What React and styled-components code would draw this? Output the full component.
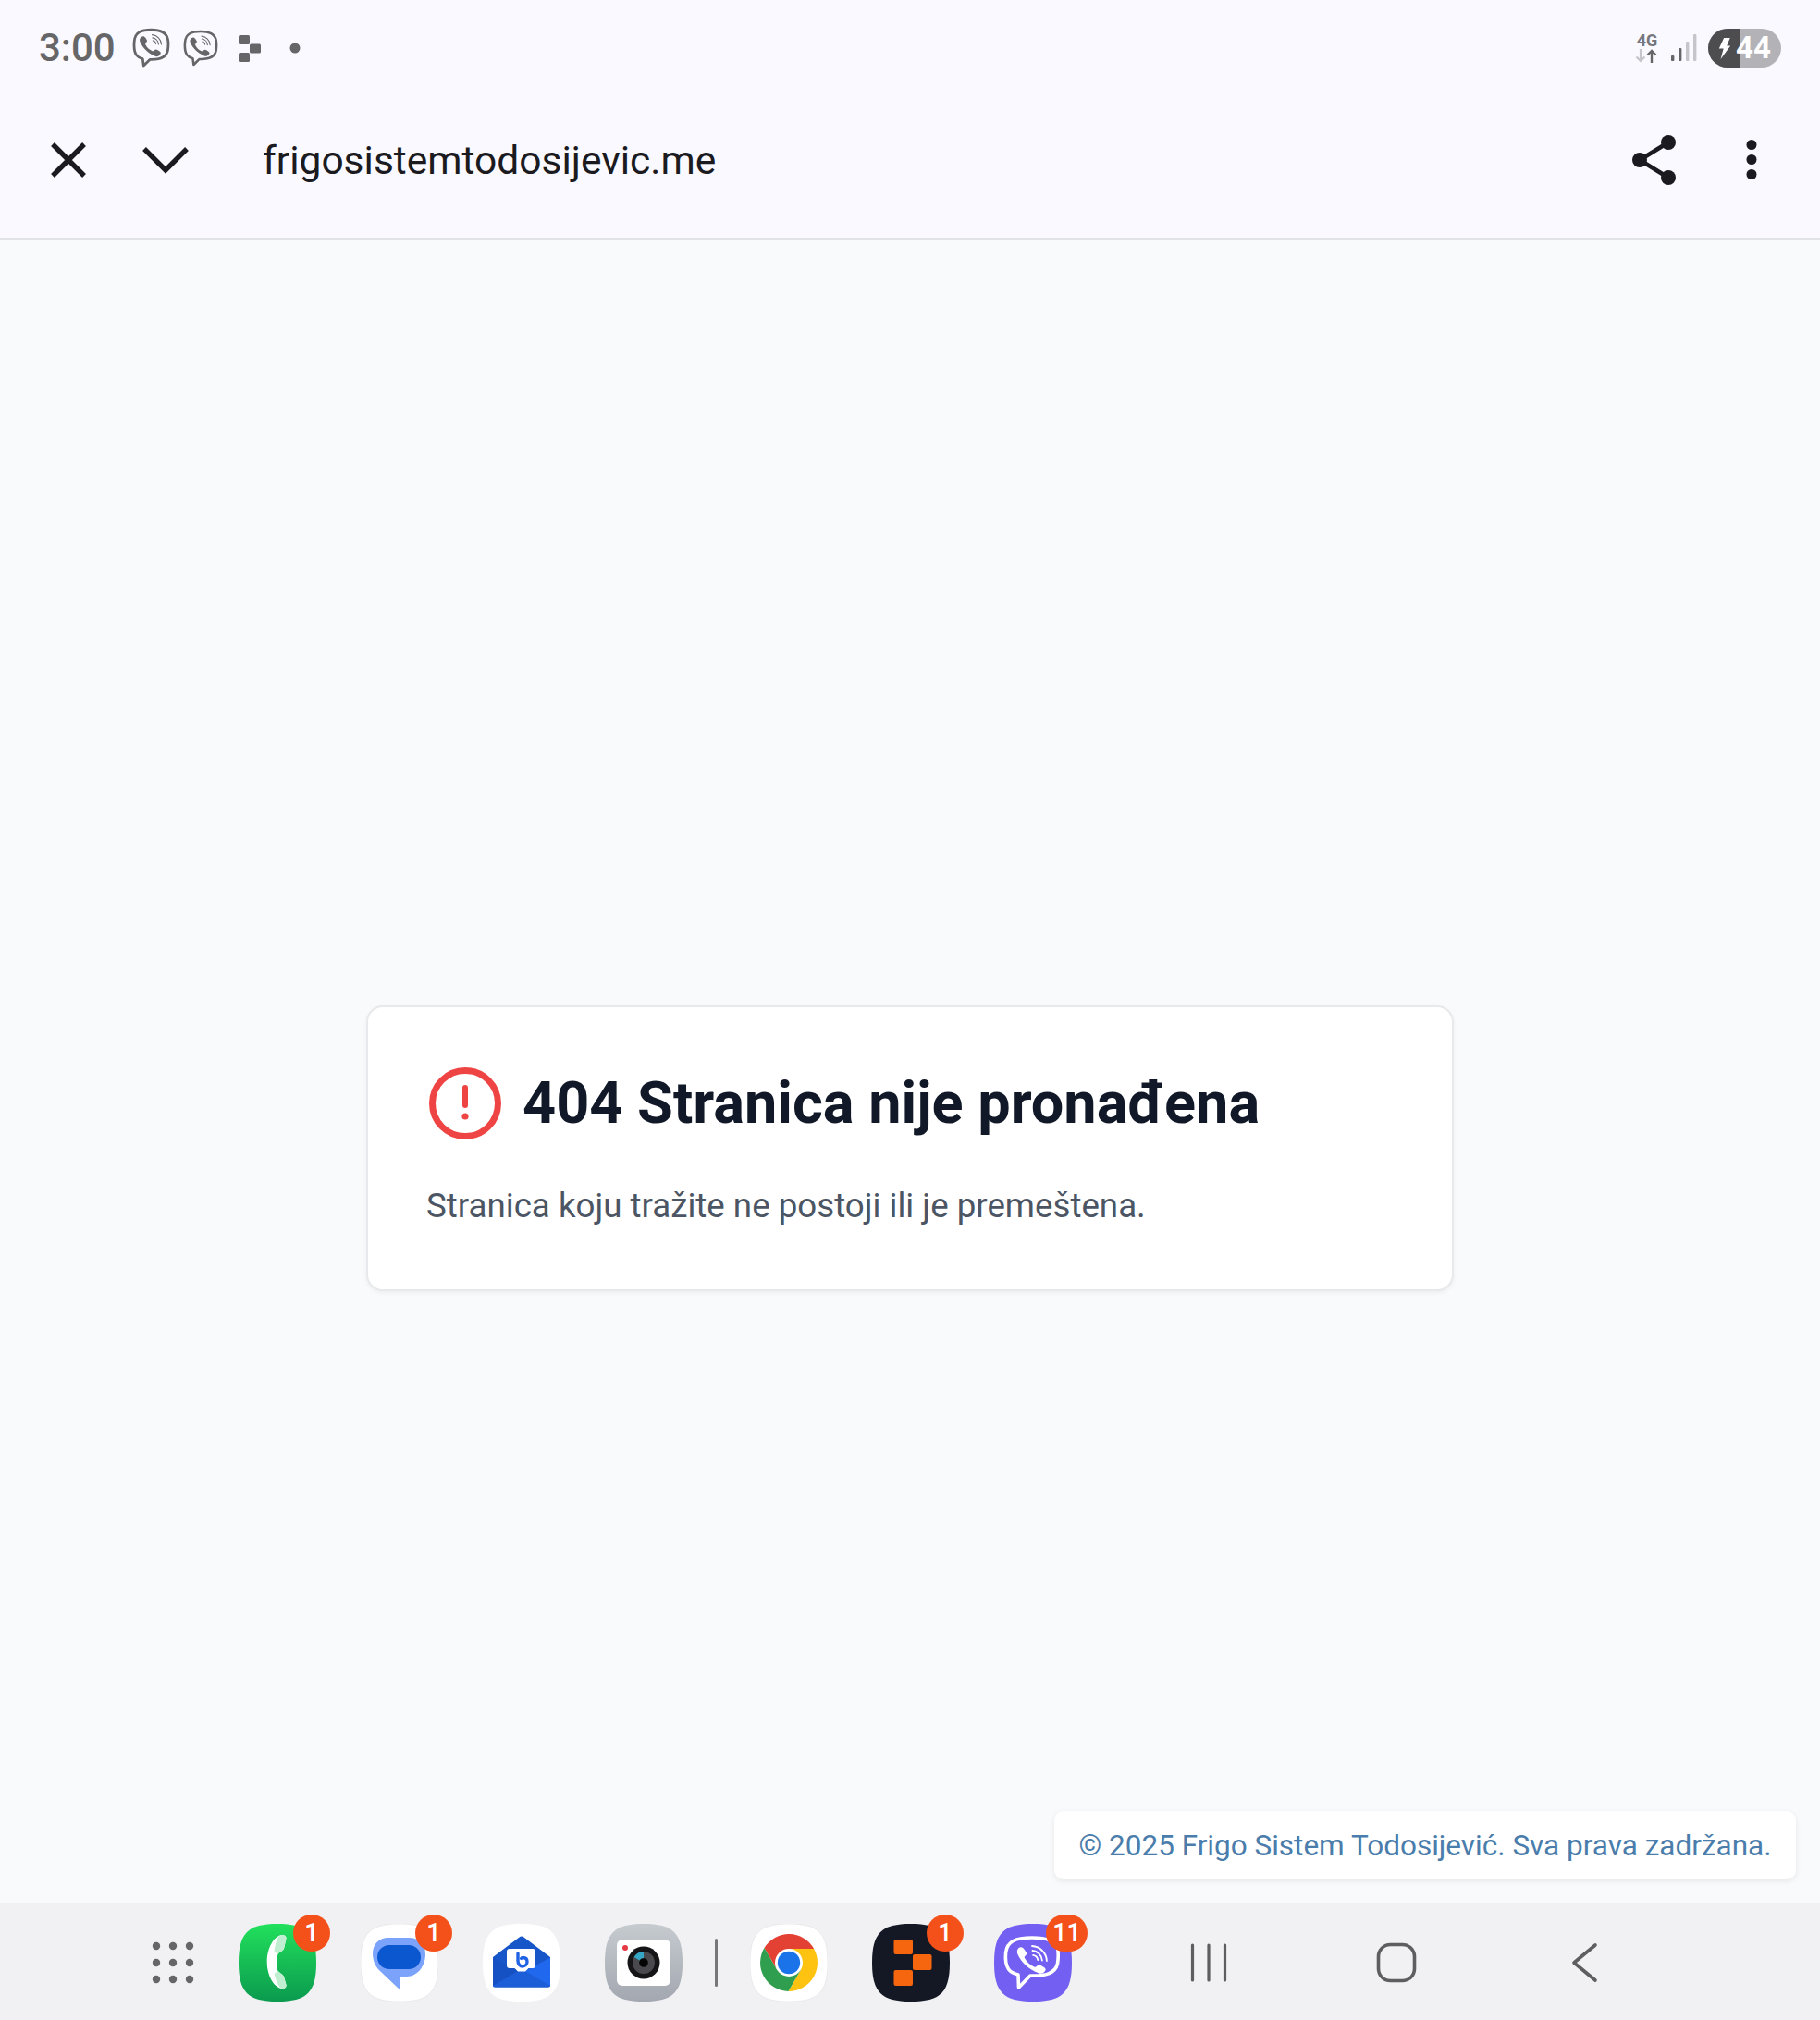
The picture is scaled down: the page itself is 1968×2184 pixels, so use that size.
import React from 'react';
import styled, { createGlobalStyle } from 'styled-components';

const GlobalStyle = createGlobalStyle`
  html, body {
    margin: 0;
    padding: 0;
    background: #f9fafb;
    font-family: 'Roboto', sans-serif;
  }
`;

const Screen = styled.div`
  width: 1968px;
  height: 2184px;
  display: flex;
  flex-direction: column;
  overflow: hidden;
`;

const Header = styled.header`
  height: 257px;
  flex: none;
  background: #f9f9ff;
  border-bottom: 3px solid #e2e3e6;
  display: flex;
  flex-direction: column;
`;

const StatusBar = styled.div`
  height: 104px;
  display: flex;
  align-items: center;
  justify-content: space-between;
  padding: 0 42px 0 42px;
`;

const StatusGroup = styled.div`
  display: flex;
  align-items: center;
`;

const Clock = styled.span`
  font-size: 42px;
  line-height: 46px;
  font-weight: 500;
  color: #666668;
  width: 101px;
`;

const Network = styled.div`
  width: 26px;
  display: flex;
  flex-direction: column;
  align-items: center;
  gap: 2px;
`;

const NetworkType = styled.span`
  font-size: 18px;
  line-height: 15px;
  font-weight: 700;
  color: #77777b;
`;

const Battery = styled.div`
  position: relative;
  width: 79px;
  height: 42px;
  border-radius: 21px;
  overflow: hidden;
  display: flex;
  margin-left: 12px;
  background: #b3b2b6;
`;

const BatteryCharge = styled.div`
  width: 34px;
  background: #4d4d4f;
  display: flex;
  align-items: center;
  justify-content: flex-end;
  padding-right: 9px;
  box-sizing: border-box;
`;

const BatteryLevel = styled.span`
  font-size: 33px;
  line-height: 42px;
  font-weight: 700;
  color: #fff;
  margin-left: -4px;
`;

const Toolbar = styled.div`
  flex: 1;
  display: flex;
  align-items: center;
  padding: 0 0 16px 54px;
`;

const Url = styled.span`
  font-size: 42.5px;
  color: #1b1b1f;
  margin-left: 80px;
  padding-top: 2px;
  flex: 1;
`;

const ToolbarActions = styled.div`
  display: flex;
  align-items: center;
  gap: 75px;
  padding-right: 68px;
`;

const Main = styled.main`
  flex: 1;
  display: flex;
  flex-direction: column;
  align-items: center;
  padding-top: 827px;
  background: #f9fafb;
`;

const Card = styled.section`
  width: 1176px;
  height: 309px;
  box-sizing: border-box;
  background: #fff;
  border-radius: 18px;
  border: 2px solid #e8e9ec;
  box-shadow: 0 2px 5px rgba(0, 0, 0, 0.05);
  padding: 64px 64px;
`;

const CardTitleRow = styled.div`
  display: flex;
  align-items: center;
  gap: 23px;
  margin-left: 2px;
`;

const CardTitle = styled.h1`
  margin: 0;
  font-size: 63px;
  line-height: 80px;
  font-weight: 700;
  color: #111827;
`;

const CardText = styled.p`
  margin: 47px 0 0 -1px;
  font-size: 36.7px;
  line-height: 48px;
  color: #4b5563;
`;

const FooterRow = styled.div`
  flex: none;
  display: flex;
  justify-content: flex-end;
  padding: 0 26px 26px 0;
  background: #f9fafb;
`;

const FooterNote = styled.div`
  width: 802px;
  height: 74px;
  box-sizing: border-box;
  background: #fff;
  border-radius: 10px;
  box-shadow: 0 2px 6px rgba(0, 0, 0, 0.08);
  display: flex;
  align-items: center;
  justify-content: center;
  font-size: 31.5px;
  color: #4a7dab;
`;

const Dock = styled.nav`
  height: 126px;
  box-sizing: border-box;
  flex: none;
  background: #f1f1f4;
  display: flex;
  align-items: center;
  padding: 2px 0 0 164px;
`;

const AppGrid = styled.svg`
  width: 46px;
  height: 46px;
  margin-right: 48px;
  flex: none;
`;

const AppRow = styled.div`
  display: flex;
  align-items: center;
  gap: 48px;
`;

const AppSlot = styled.div`
  position: relative;
  width: 84px;
  height: 84px;
  flex: none;
`;

const Badge = styled.span`
  position: absolute;
  top: -10px;
  right: ${(p) => (p.$wide ? '-17px' : '-15px')};
  width: ${(p) => (p.$wide ? '45px' : '40px')};
  height: 40px;
  border-radius: 20px;
  background: #f4511a;
  color: #fff;
  font-size: 27px;
  font-weight: 500;
  line-height: 40px;
  text-align: center;
`;

const Divider = styled.div`
  width: 3px;
  height: 52px;
  border-radius: 2px;
  background: #77777a;
  margin: 0 35px 0 35px;
`;

const NavButtons = styled.div`
  display: flex;
  align-items: center;
  margin-left: 128px;
`;

const NavSlot = styled.svg`
  flex: none;
  margin-right: ${(p) => p.$gap}px;
`;

const SQUIRCLE = 'M42 0C74 0 84 10 84 42C84 74 74 84 42 84C10 84 0 74 0 42C0 10 10 0 42 0Z';

const ViberOutline = ({ size, gap, stroke = '#666668' }) => (
  <svg width={size} height={size * 1.075} viewBox="0 0 40 43" fill="none" style={{ flex: 'none', marginLeft: gap }}>
    <path d="M20 2.2C9 2.2 3 5 2.2 14C1.7 19 1.8 25 4.5 29C6 31 8 32 11 32.8L12 40L18.5 33.6C29 34 36 32 37.5 24C38.2 19 38.2 15 37.5 12C36 5 30 2.2 20 2.2Z" stroke={stroke} strokeWidth="2.7" strokeLinejoin="round" />
    <path transform="matrix(1.15 0 0 1.1 -4.5 -1.5)" d="M12.5 10C14 9 15 9.5 16 11L17.3 13.2C17.8 14.3 17.3 15 16.4 15.8C15.8 16.3 15.8 17 16.3 18C17.5 20.5 19.5 22.4 22 23.5C23 24 23.6 23.6 24.2 23C25 22 25.8 21.8 27 22.6L29 24C30.3 25 30.3 26 29.3 27.3C28 29 26.6 29.4 24.8 28.6C18.5 25.6 13.6 21 11 14.6C10.3 12.8 11 11 12.5 10Z" fill={stroke} />
    <path d="M21 7.5C26 7.8 30.5 12 30.7 17.5M21.4 10.6C24.6 11 27.5 13.6 27.7 17.5M21.8 13.6C23.2 13.9 24.7 15 24.9 17" stroke={stroke} strokeWidth="1.1" strokeLinecap="round" />
  </svg>
);

const PhoneIcon = () => (
  <svg width="84" height="84" viewBox="0 0 84 84">
    <defs>
      <linearGradient id="phoneBg" x1="0" y1="0" x2="0" y2="1">
        <stop offset="0" stopColor="#22e05c" />
        <stop offset="1" stopColor="#0a9a4e" />
      </linearGradient>
    </defs>
    <path d={SQUIRCLE} fill="url(#phoneBg)" />
    <path d="M46 12C49 11.5 52 13 51.5 16L49 27C47.5 30 44 30 42.5 33C40.5 38 40.5 46 42.5 51C44 53 47.5 54 49 57L51.5 66C52 69 49 71 46 70C38 68 30.7 56 30.7 41C30.7 26 38 14 46 12Z" fill="#fff" />
    <path d="M46 12C49 11.5 52 13 51.5 16L49 27C47.5 30 44 30 42.5 33L38.5 30C39.5 22 42 13 46 12Z" fill="#c0eed0" />
    <path d="M49 57L51.5 66C52 69 49 71 46 70C43 68 40 60 38.5 54L42.5 51C44 53 47.5 54 49 57Z" fill="#c0eed0" />
  </svg>
);

const MessagesIcon = () => (
  <svg width="84" height="84" viewBox="0 0 84 84">
    <path d={SQUIRCLE} fill="#fff" stroke="#e6e6ea" strokeWidth="0.8" />
    <path d="M30 15H52C64 15 70 23 70 33C70 46 61 57 50 57H42.5V69C42.5 70.5 41.5 70.5 40.5 69.5L22 52C16 47 13 40 13 32C13 22 20 15 30 15Z" fill="#7ba3fb" />
    <rect x="18" y="23" width="47" height="26" rx="13" fill="#0b57d0" />
  </svg>
);

const MailIcon = () => (
  <svg width="84" height="84" viewBox="0 0 84 84">
    <path d={SQUIRCLE} fill="#fff" />
    <path d="M39.5 14.5C41 13.3 43 13.3 44.5 14.5L73 36V66C73 67.5 72 68.5 70 68.5H14C12 68.5 11 67.5 11 66V36Z" fill="#1756c8" />
    <path d="M11 36.5L40 52L11 67Z" fill="#1651c4" />
    <path d="M73 36.5L44 52L73 67Z" fill="#2068ee" />
    <path d="M11 67L40 50H44L73 67C73 68 72 68.5 70 68.5H14C12 68.5 11 68 11 67Z" fill="#1c5dd8" />
    <path d="M26 30C26 28 27 27 29 27H54C56 27 57 28 57 30V45C57 47 56 48 54 48H49.5L46 51.5H38L34.5 48H29C27 48 26 47 26 45Z" fill="#fff" />
    <path d="M38 32V40C38 43.5 40.5 46 43 46C46 46 48 43.5 48 41C48 38 46 36.5 43.5 36.5C42.6 36.5 42 36.8 41.6 37.4" stroke="#1f63e4" strokeWidth="3.4" fill="none" strokeLinecap="round" />
  </svg>
);

const CameraIcon = () => (
  <svg width="84" height="84" viewBox="0 0 84 84">
    <defs>
      <linearGradient id="camBg" x1="0" y1="0" x2="0" y2="1">
        <stop offset="0" stopColor="#c6cbd0" />
        <stop offset="1" stopColor="#a3a7b0" />
      </linearGradient>
    </defs>
    <path d={SQUIRCLE} fill="url(#camBg)" />
    <rect x="13" y="17" width="58" height="50" rx="6" fill="#fff" />
    <circle cx="22" cy="26" r="3" fill="#e53945" />
    <circle cx="42" cy="42" r="17.5" fill="#151517" />
    <circle cx="42" cy="42" r="12" fill="#4a4a4e" />
    <path d="M42 30A12 12 0 0 0 31.6 36L37.6 39.5A5 5 0 0 1 42 37Z" fill="#35a6c4" />
    <circle cx="42" cy="42" r="4.8" fill="#050505" />
  </svg>
);

const ChromeIcon = () => (
  <svg width="84" height="84" viewBox="0 0 84 84">
    <path d={SQUIRCLE} fill="#fff" stroke="#e6e6ea" strokeWidth="0.8" />
    <path d="M69.1 27A31 31 0 0 0 15.46 26.03L29 49.5L42 42L42 27Z" fill="#e34133" />
    <path d="M69.1 27A31 31 0 0 1 41.44 72.97L55 49.5L42 42L42 27Z" fill="#fec211" />
    <path d="M15.46 26.03A31 31 0 0 0 41.44 72.97L55 49.5L42 42L29 49.5Z" fill="#2f9e4f" />
    <circle cx="42" cy="42" r="15" fill="#fff" />
    <circle cx="42" cy="42" r="12.2" fill="#1a73e8" />
  </svg>
);

const BlocksIcon = () => (
  <svg width="84" height="84" viewBox="0 0 84 84">
    <path d={SQUIRCLE} fill="#141824" />
    <rect x="23.5" y="17" width="20.5" height="16" rx="2" fill="#f5660f" />
    <rect x="44" y="33" width="20.5" height="17" rx="2" fill="#f5660f" />
    <rect x="23.5" y="50" width="20.5" height="17" rx="2" fill="#f5660f" />
  </svg>
);

const ViberIcon = () => (
  <svg width="84" height="84" viewBox="0 0 84 84">
    <path d={SQUIRCLE} fill="#7360f2" />
    <path d="M41 15C23 15 14 19 12.6 31C12 37 12.2 44 15.5 49C17.5 52 20 53.5 26 55L26.5 69L39 56C55 56.5 66 54 68.5 43C69.6 36 69.5 31 68.5 26C66 18 56 15 41 15Z" fill="none" stroke="#fff" strokeWidth="3.6" strokeLinejoin="round" />
    <path transform="matrix(.925 0 0 .84 2 7.8)" d="M27 21.5C29.5 20 31 21 32.5 23L35.5 27.5C36.5 29.5 35.5 30.5 34 32C33 33 33 34 33.8 35.5C36 40 40 44 44.5 46C46 46.6 47 46.4 48 45C49.4 43.4 50.5 43 52.5 44.2L56.5 47C58.5 48.6 58.5 50 57 52C55 54.5 52.5 55.5 49.5 54C38 48.8 29.5 40.5 25 29C24 26 25 23 27 21.5Z" fill="#fff" />
    <path transform="translate(-1.5 4.5)" d="M42.5 19.5C51 20 58 27 58.4 35.5M43 24.5C48.5 25 53 29.4 53.4 35M43.6 29.4C46.4 29.8 48.4 31.8 48.8 34.6" stroke="#fff" strokeWidth="1.8" fill="none" strokeLinecap="round" />
  </svg>
);

const ICONS_LEFT = [
  { key: 'phone', Icon: PhoneIcon, badge: '1' },
  { key: 'messages', Icon: MessagesIcon, badge: '1' },
  { key: 'mail', Icon: MailIcon },
  { key: 'camera', Icon: CameraIcon },
];

const ICONS_RIGHT = [
  { key: 'chrome', Icon: ChromeIcon },
  { key: 'blocks', Icon: BlocksIcon, badge: '1' },
  { key: 'viber', Icon: ViberIcon, badge: '11', wide: true },
];

const renderApps = (apps) =>
  apps.map(({ key, Icon, badge, wide }) => (
    <AppSlot key={key}>
      <Icon />
      {badge && <Badge $wide={wide}>{badge}</Badge>}
    </AppSlot>
  ));

export default function App() {
  return (
    <Screen>
      <GlobalStyle />
      <Header>
        <StatusBar>
          <StatusGroup>
            <Clock>3:00</Clock>
            <ViberOutline size={41} gap={0} />
            <ViberOutline size={38} gap={14} />
            <svg width="24" height="29" viewBox="0 0 24 29" style={{ marginLeft: 22 }}>
              <rect width="12" height="10" rx="1.5" fill="#666668" />
              <rect x="12" y="9.5" width="12" height="10" rx="1.5" fill="#666668" />
              <rect y="19" width="12" height="10" rx="1.5" fill="#666668" />
            </svg>
            <svg width="12" height="12" viewBox="0 0 12 12" style={{ marginLeft: 31 }}>
              <circle cx="6" cy="6" r="5.5" fill="#666668" />
            </svg>
          </StatusGroup>
          <StatusGroup>
            <Network>
              <NetworkType>4G</NetworkType>
              <svg width="26" height="15" viewBox="0 0 26 15">
                <path d="M6 0V13M1.5 8.5L6 13L10.5 8.5" stroke="#c6c6ca" strokeWidth="2.2" fill="none" />
                <path d="M18 15V2M13.5 6.5L18 2L22.5 6.5" stroke="#666668" strokeWidth="2.4" fill="none" />
              </svg>
            </Network>
            <svg width="28" height="30" viewBox="0 0 28 30" style={{ marginLeft: 13 }}>
              <rect x="0" y="23" width="3.4" height="6" rx="1" fill="#666668" />
              <rect x="8" y="15" width="3.4" height="14" rx="1" fill="#666668" />
              <rect x="16" y="8" width="3.4" height="21" rx="1" fill="#c6c6ca" />
              <rect x="24" y="0" width="3.4" height="29" rx="1" fill="#c6c6ca" />
            </svg>
            <Battery>
              <BatteryCharge>
                <svg width="14" height="23" viewBox="0 0 14 26">
                  <path d="M6 0H13.5L9.5 9.5H14L2 26L5.5 13H0Z" fill="#fff" />
                </svg>
              </BatteryCharge>
              <BatteryLevel>44</BatteryLevel>
            </Battery>
          </StatusGroup>
        </StatusBar>
        <Toolbar>
          <svg width="40" height="38" viewBox="0 0 40 38" fill="none" stroke="#1b1b1f" strokeWidth="5.4">
            <path d="M3 2L37 36M37 2L3 36" />
          </svg>
          <svg width="50" height="30" viewBox="0 0 50 30" fill="none" stroke="#1b1b1f" strokeWidth="5.4" style={{ marginLeft: 60 }}>
            <path d="M2 3L25 26L48 3" />
          </svg>
          <Url>frigosistemtodosijevic.me</Url>
          <ToolbarActions>
            <svg width="48" height="54" viewBox="0 0 48 54">
              <path d="M39 8L8 27L39 46" stroke="#1b1b1f" strokeWidth="4.6" fill="none" />
              <circle cx="39" cy="8" r="8" fill="#1b1b1f" />
              <circle cx="8" cy="27" r="8" fill="#1b1b1f" />
              <circle cx="39" cy="46" r="8" fill="#1b1b1f" />
            </svg>
            <svg width="12" height="43" viewBox="0 0 12 43" fill="#1b1b1f">
              <circle cx="6" cy="5.5" r="5.5" />
              <circle cx="6" cy="21.5" r="5.5" />
              <circle cx="6" cy="37.5" r="5.5" />
            </svg>
          </ToolbarActions>
        </Toolbar>
      </Header>
      <Main>
        <Card>
          <CardTitleRow>
            <svg width="78" height="78" viewBox="0 0 78 78" fill="none" style={{ flex: 'none' }}>
              <circle cx="39" cy="39" r="35.5" stroke="#ef4444" strokeWidth="7" />
              <path d="M39 22V41" stroke="#ef4444" strokeWidth="6" strokeLinecap="round" />
              <circle cx="39" cy="53" r="3.6" fill="#ef4444" />
            </svg>
            <CardTitle>404 Stranica nije pronađena</CardTitle>
          </CardTitleRow>
          <CardText>Stranica koju tražite ne postoji ili je premeštena.</CardText>
        </Card>
      </Main>
      <FooterRow>
        <FooterNote>© 2025 Frigo Sistem Todosijević. Sva prava zadržana.</FooterNote>
      </FooterRow>
      <Dock>
        <AppGrid viewBox="0 0 46 46" fill="#666668">
          {[5, 23, 41].flatMap((y) =>
            [5, 23, 41].map((x) => <circle key={`${x}-${y}`} cx={x} cy={y} r="4.2" />)
          )}
        </AppGrid>
        <AppRow>{renderApps(ICONS_LEFT)}</AppRow>
        <Divider />
        <AppRow>{renderApps(ICONS_RIGHT)}</AppRow>
        <NavButtons>
          <NavSlot width="40" height="42" viewBox="0 0 40 42" $gap={161} fill="none" stroke="#5e5e60" strokeWidth="3.2" strokeLinecap="round">
            <path d="M2.5 2V40M20 2V40M37.5 2V40" />
          </NavSlot>
          <NavSlot width="44" height="44" viewBox="0 0 44 44" $gap={167} fill="none" stroke="#5e5e60" strokeWidth="3.6">
            <rect x="2.5" y="2.5" width="39" height="39" rx="13" />
          </NavSlot>
          <NavSlot width="30" height="44" viewBox="0 0 30 44" $gap={0} fill="none" stroke="#5e5e60" strokeWidth="3.6" strokeLinecap="round" strokeLinejoin="round">
            <path d="M26 3L3 22L26 41" />
          </NavSlot>
        </NavButtons>
      </Dock>
    </Screen>
  );
}
